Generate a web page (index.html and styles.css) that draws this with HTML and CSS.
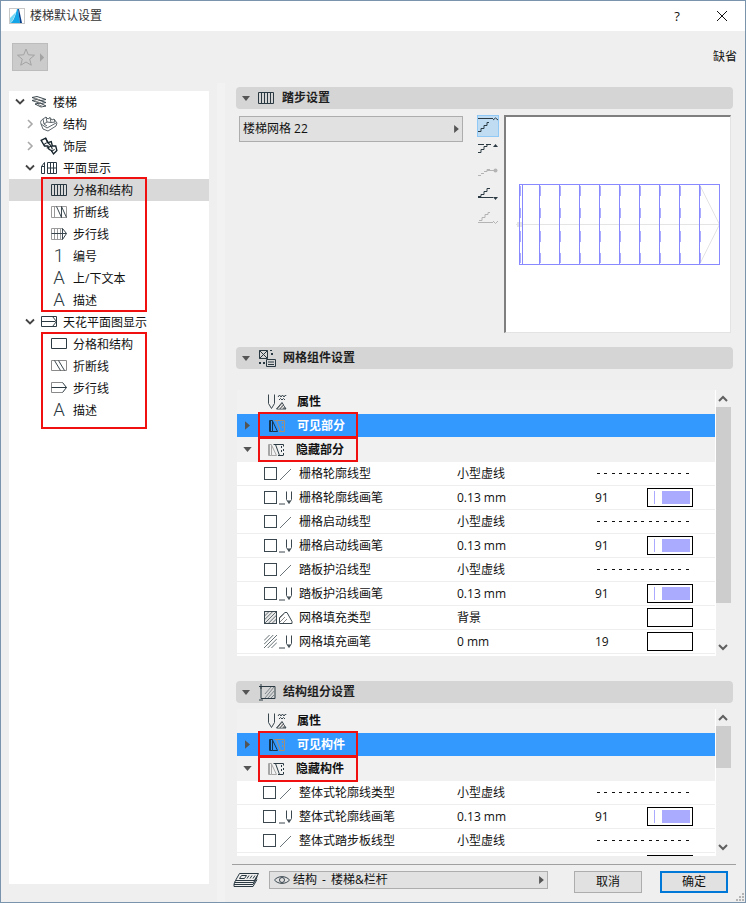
FILE: index.html
```html
<!DOCTYPE html>
<html lang="zh">
<head>
<meta charset="utf-8">
<title>楼梯默认设置</title>
<link rel="stylesheet" href="styles.css">
</head>
<body>
<svg class="defs" xmlns="http://www.w3.org/2000/svg">
  <symbol id="i-grid" viewBox="0 0 16 12"><path d="M.5.5h15v11H.5zM3.500.5v11M6.500.5v11M9.500.5v11M12.500.5v11" fill="none" stroke="#2b3a42"/></symbol>
  <symbol id="i-break" viewBox="0 0 16 12"><path d="M.5.5h15v11H.5zM3.500.5v11" fill="none" stroke="#9a9a9a"/><path d="M5.500.5l5 11v-11l5 11" fill="none" stroke="#3a474e"/></symbol>
  <symbol id="i-walk" viewBox="0 0 16 12"><path d="M11.500.5H.5v11h11M3.500.5v11M6.500.5v11M9.500.5v11" fill="none" stroke="#9a9a9a"/><path d="M.5 5.500h15M11.500.5v11M11.500.5l4 5-4 6" fill="none" stroke="#3a474e"/></symbol>
  <symbol id="i-rect" viewBox="0 0 16 12"><path d="M.5.5h15v10H.5z" fill="none" stroke="#2b3a42"/></symbol>
  <symbol id="i-cbreak" viewBox="0 0 16 12"><path d="M.5.5h15v10H.5z" fill="none" stroke="#8a8a8a"/><path d="M3.500.5l6 10M7.500.5l6 10" fill="none" stroke="#3a474e"/></symbol>
  <symbol id="i-cwalk" viewBox="0 0 16 12"><path d="M11.500.5H.5v10h11" fill="none" stroke="#8a8a8a"/><path d="M.5 5.500h15M11.500.5l4 5-4 5" fill="none" stroke="#2b3a42"/></symbol>
  <symbol id="i-stair" viewBox="0 0 16 12"><path d="M1 1.500l5-1 9 3-5 1zM1 4.500l5-1 9 3-5 1zM4 8l5-1 6 3-5 1z" fill="#fff" stroke="#3a474e"/><path d="M3 2l6 2M4 5l6 2M7 8.500l5 2" stroke="#8a8a8a" fill="none"/></symbol>
  <symbol id="i-struct" viewBox="0 0 18 18"><path d="M1 9C0 7 1 5 3 4l3-2 2 2 2-1.500 2 2.500 2-1 3 4-1 3-8 5-5-2z" fill="#fff" stroke="#5e676c"/><path d="M3 4l1 5 3 2M6 2l1 5M10 2.500l1 5M14 4l1 3M4 9l3-2 4 .5 4-.5M1 9l6 4 9-5" fill="none" stroke="#5e676c"/></symbol>
  <symbol id="i-finish" viewBox="0 0 16 16"><path d="M1 3l4-2 2 4 3-1 1 4 3 0 1 4-3 3-2-3-2-1-1-3-3 0z" fill="#fff" stroke="#17242c" stroke-width="1.200"/><path d="M3 7l3-2M6 10l4-2M10 13l3-2M5 1l2 4 3 3 1 3" fill="none" stroke="#17242c"/></symbol>
  <symbol id="i-plan" viewBox="0 0 16 12"><path d="M.5 11.500v-7h3v7zM3.500 11.500V.5M6.500 11.500V.5h9v11h-9zM9.500.5v11M12.500.5v11M6.500 6h9M.5 4.500L3.500.5" fill="none" stroke="#2b3a42"/></symbol>
  <symbol id="i-ceil" viewBox="0 0 16 12"><path d="M.5.5h15v10H.5zM.5 5.500h14M11.500.5l4 5-4 5" fill="none" stroke="#2b3a42"/></symbol>
  <symbol id="i-pen" viewBox="0 0 14 14"><path d="M7.500.5v8l2.500 4 2.500-4v-8" fill="none" stroke="#3a474e"/><path d="M0 13h6" stroke="#3a474e" fill="none"/><path d="M8.500 9.500h3L10 12z" fill="#3a474e"/></symbol>
  <symbol id="i-line" viewBox="0 0 14 14"><path d="M1 13L12 2" fill="none" stroke="#6a7378"/></symbol>
  <symbol id="i-fillt" viewBox="0 0 14 14"><path d="M.5 12.500v-6L6 1.500h2l5 9v2z" fill="none" stroke="#3a474e"/><path d="M1 11l5-5M4 12l4-4M1 7l4-4" stroke="#8a8a8a" fill="none"/></symbol>
  <symbol id="i-hatch" viewBox="0 0 14 14"><path d="M0 6l6-6M0 10L10 0M0 14L14 0M4 14L14 4M8 14l6-6" stroke="#5a6469" fill="none"/></symbol>
  <symbol id="i-attr" viewBox="0 0 19 16"><path d="M.5.5v9l3 5 3-5v-9" fill="none" stroke="#3a474e"/><path d="M10 3l1.500-2 1.500 2 1.500-2 1.500 2 1.500-2 .5 1M11 6l1.500-1.500L14 6l1.500-1.500L17 6" fill="none" stroke="#3a474e"/><path d="M8.500 15L14 8.500l4 6.500z" fill="#8b8b8b" stroke="#3a474e"/><path d="M10.500 15l4-5M13.500 15l3-3.500" stroke="#fff" fill="none"/></symbol>
  <symbol id="i-show" viewBox="0 0 16 12"><path d="M.5 11.500V.5h3v11zM3.500 1l5 10.500h-5M1.500 .5v11" fill="none" stroke="#17344c"/><path d="M5.500.5h10v11H10M7.500.5l4 11M13.500 2v2M13.500 6v2" fill="none" stroke="#a58f77"/></symbol>
  <symbol id="i-hide" viewBox="0 0 16 12"><path d="M.5 11.500V.5h3v11zM3.500 1l5 10.500h-5M1.500 .5v11" fill="none" stroke="#a6a6a6"/><path d="M5.500.5h10M10 11.500h5.500M7.500.5l4 11M15.500 .5v2M15.500 5v2M15.500 9v2M13.500 2v2M13.500 6v2" fill="none" stroke="#2b3a42"/></symbol>
  <symbol id="i-tri-r" viewBox="0 0 6 10"><path d="M0 0l6 5-6 5z" fill="#555"/></symbol>
  <symbol id="i-tri-d" viewBox="0 0 10 6"><path d="M0 0h10L5 6z" fill="#555"/></symbol>
  <symbol id="i-chev-d" viewBox="0 0 10 7"><path d="M1 1l4 4 4-4" fill="none" stroke="#444" stroke-width="1.800"/></symbol>
  <symbol id="i-chev-r" viewBox="0 0 10 10"><path d="M3 1l4 4-4 4" fill="none" stroke="#a9a9a9" stroke-width="1.600"/></symbol>
  <symbol id="i-up" viewBox="0 0 10 7"><path d="M1 6l4-4 4 4" fill="none" stroke="#606060" stroke-width="2"/></symbol>
  <symbol id="i-down" viewBox="0 0 10 7"><path d="M1 1l4 4 4-4" fill="none" stroke="#606060" stroke-width="2"/></symbol>
</svg>

<div class="window">
  <header class="title">
    <svg class="logo" viewBox="0 0 16 16"><rect x=".5" y=".5" width="15" height="15" fill="#fff" stroke="#c8c8c8"/><path d="M1 15C4 15 7 6 8 1h1l2 14z" fill="#12a5e8"/><path d="M1 15C3 15 6 8 7 4L1 10z" fill="#6fd6f5"/><path d="M9 1h1l3 14h-2z" fill="#0a3f8a"/></svg>
    <span class="title-text">楼梯默认设置</span>
    <span class="help">?</span>
    <svg class="close" viewBox="0 0 10 10"><path d="M0 0l10 10M10 0L0 10" stroke="#111" fill="none"/></svg>
  </header>

  <div class="toolbar">
    <div class="fav">
      <svg class="star" viewBox="0 0 18 18"><path d="M9 1l2.300 5.800 6.200.4-4.800 4 1.600 6L9 14l-5.300 3.200 1.600-6-4.800-4 6.200-.4z" fill="none" stroke="#a3a3a3"/></svg>
      <svg class="fav-arrow" viewBox="0 0 6 10"><path d="M0 0l5 5-5 5z" fill="#a3a3a3"/></svg>
    </div>
    <span class="default">缺省</span>
  </div>

  <div class="main">
    <nav class="tree">
      <div class="node lv0"><svg class="chev"><use href="#i-chev-d"/></svg><svg class="ic"><use href="#i-stair"/></svg><span>楼梯</span></div>
      <div class="node lv1"><svg class="chev"><use href="#i-chev-r"/></svg><svg class="ic-lg"><use href="#i-struct"/></svg><span>结构</span></div>
      <div class="node lv1"><svg class="chev"><use href="#i-chev-r"/></svg><svg class="ic-lg"><use href="#i-finish"/></svg><span>饰层</span></div>
      <div class="node lv1"><svg class="chev"><use href="#i-chev-d"/></svg><svg class="ic-lg ic-plan"><use href="#i-plan"/></svg><span>平面显示</span></div>
      <div class="node lv2 active"><svg class="ic"><use href="#i-grid"/></svg><span>分格和结构</span></div>
      <div class="node lv2"><svg class="ic"><use href="#i-break"/></svg><span>折断线</span></div>
      <div class="node lv2"><svg class="ic"><use href="#i-walk"/></svg><span>步行线</span></div>
      <div class="node lv2"><b class="glyph">1</b><span>编号</span></div>
      <div class="node lv2"><b class="glyph">A</b><span>上/下文本</span></div>
      <div class="node lv2"><b class="glyph">A</b><span>描述</span></div>
      <div class="node lv1"><svg class="chev"><use href="#i-chev-d"/></svg><svg class="ic-lg ic-plan"><use href="#i-ceil"/></svg><span>天花平面图显示</span></div>
      <div class="node lv2"><svg class="ic"><use href="#i-rect"/></svg><span>分格和结构</span></div>
      <div class="node lv2"><svg class="ic"><use href="#i-cbreak"/></svg><span>折断线</span></div>
      <div class="node lv2"><svg class="ic"><use href="#i-cwalk"/></svg><span>步行线</span></div>
      <div class="node lv2"><b class="glyph">A</b><span>描述</span></div>
      <div class="mark mark-a"></div>
      <div class="mark mark-b"></div>
    </nav>

    <div class="splitter"></div>

    <div class="pane">
      <section class="sec-head sec-1">
        <svg class="tri-d"><use href="#i-tri-d"/></svg>
        <svg class="sec-ic sec-ic-grid"><use href="#i-grid"/></svg>
        <span>踏步设置</span>
      </section>

      <div class="tread">
        <div class="select tread-select"><span>楼梯网格 22</span><svg class="tri-r"><use href="#i-tri-r"/></svg></div>
        <div class="tools">
          <div class="tool on"><svg viewBox="0 0 20 20"><path d="M0 2.500h15M0 15.500h3v-3h3v-3h3v-3h2" fill="none" stroke="#2b3a42"/><path d="M15 4l2.500-2L20 4" fill="none" stroke="#2b3a42"/></svg></div>
          <div class="tool"><svg viewBox="0 0 20 20"><path d="M0 4.500h6M8 4.500h5M0 12.500h3v-3h3v-3h3v-2" fill="none" stroke="#2b3a42"/><path d="M15 7l2.500-3L20 7z" fill="#2b3a42"/></svg></div>
          <div class="tool"><svg viewBox="0 0 20 20"><path d="M0 11.500h3M3 9.500h3M6 7.500h3v-2h3M9 6.500h8" fill="none" stroke="#b4b4b4"/><circle cx="17.500" cy="6.500" r="2" fill="#b4b4b4"/></svg></div>
          <div class="tool"><svg viewBox="0 0 20 20"><path d="M0 8.500h3v-2h3v-3h3v-3h3M0 9.500h15" fill="none" stroke="#2b3a42"/><path d="M15 9h5l-2.500 3z" fill="#2b3a42"/></svg></div>
          <div class="tool"><svg viewBox="0 0 20 20"><path d="M1 8.500h3v-3h3v-3h3v-2h2M0 10.500h15M15 9l2.500 2.500L20 9" fill="none" stroke="#b4b4b4"/></svg></div>
        </div>
        <div class="preview">
          <svg viewBox="506 117 224 215" shape-rendering="crispEdges">
            <path d="M519.500 224.500H719.500M699.500 184.500L719.500 224.500L699.500 264.500" fill="none" stroke="#e4e4e4" shape-rendering="auto"/>
            <circle cx="519.500" cy="224.500" r="3" fill="#e4e4e4"/>
            <path d="M519.500 184.500h200v80h-200zM522.500 184.500v80M539.500 184.500v80M559.500 184.500v80M579.500 184.500v80M599.500 184.500v80M619.500 184.500v80M639.500 184.500v80M659.500 184.500v80M679.500 184.500v80M699.500 184.500v80" fill="none" stroke="#8888ff"/>
            <path d="M520.500 186v10M520.500 208v10M520.500 231v11M520.500 253v10M540.500 186v10M540.500 208v10M540.500 231v11M540.500 253v10M560.500 186v10M560.500 208v10M560.500 231v11M560.500 253v10M580.500 186v10M580.500 208v10M580.500 231v11M580.500 253v10M600.500 186v10M600.500 208v10M600.500 231v11M600.500 253v10M620.500 186v10M620.500 208v10M620.500 231v11M620.500 253v10M640.500 186v10M640.500 208v10M640.500 231v11M640.500 253v10M660.500 186v10M660.500 208v10M660.500 231v11M660.500 253v10M680.500 186v10M680.500 208v10M680.500 231v11M680.500 253v10M700.500 186v10M700.500 208v10M700.500 231v11M700.500 253v10" fill="none" stroke="#aaaaff"/>
          </svg>
        </div>
      </div>

      <section class="sec-head sec-2">
        <svg class="tri-d"><use href="#i-tri-d"/></svg>
        <svg class="sec-ic" viewBox="0 0 18 18"><path d="M1.500 1.500h8v8h-8zM1.500 1.500l8 8M9.500 1.500l-8 8" fill="none" stroke="#2b3a42"/><path d="M12 1h2v1h-2zM13 4h2v2h-2zM1 13h2v2H1zM5 13h2v2H5z" fill="#2b3a42"/><path d="M8.500 10.500h9v7h-9zM10 13h6M10 15.500h6" fill="none" stroke="#2b3a42"/></svg>
        <span>网格组件设置</span>
      </section>

      <div class="table table-grid">
        <div class="list">
          <div class="group g-attr"><svg class="g-ic"><use href="#i-attr"/></svg><span class="g-label">属性</span></div>
          <div class="group g-sel"><svg class="g-tri"><use href="#i-tri-r"/></svg><svg class="g-ic2"><use href="#i-show"/></svg><span class="g-label">可见部分</span><div class="mark mark-top"></div></div>
          <div class="group g-hid"><svg class="g-tri-d"><use href="#i-tri-d"/></svg><svg class="g-ic2"><use href="#i-hide"/></svg><span class="g-label">隐藏部分</span><div class="mark mark-bot"></div></div>

          <div class="item"><i class="cb"></i><svg class="it"><use href="#i-line"/></svg><span>栅格轮廓线型</span><span>小型虚线</span><div class="dash"></div></div>
          <div class="item"><i class="cb"></i><svg class="it"><use href="#i-pen"/></svg><span>栅格轮廓线画笔</span><span>0.13 mm</span><span>91</span><div class="swatch"><i class="s-l"></i><i class="s-f"></i></div></div>
          <div class="item"><i class="cb"></i><svg class="it"><use href="#i-line"/></svg><span>栅格启动线型</span><span>小型虚线</span><div class="dash"></div></div>
          <div class="item"><i class="cb"></i><svg class="it"><use href="#i-pen"/></svg><span>栅格启动线画笔</span><span>0.13 mm</span><span>91</span><div class="swatch"><i class="s-l"></i><i class="s-f"></i></div></div>
          <div class="item"><i class="cb"></i><svg class="it"><use href="#i-line"/></svg><span>踏板护沿线型</span><span>小型虚线</span><div class="dash"></div></div>
          <div class="item"><i class="cb"></i><svg class="it"><use href="#i-pen"/></svg><span>踏板护沿线画笔</span><span>0.13 mm</span><span>91</span><div class="swatch"><i class="s-l"></i><i class="s-f"></i></div></div>
          <div class="item"><svg class="cb-hatch"><use href="#i-hatch"/></svg><svg class="it"><use href="#i-fillt"/></svg><span>网格填充类型</span><span>背景</span><span></span><div class="swatch"></div></div>
          <div class="item"><svg class="cb-plain"><use href="#i-hatch"/></svg><svg class="it"><use href="#i-pen"/></svg><span>网格填充画笔</span><span>0 mm</span><span>19</span><div class="swatch"></div></div>
        </div>
        <div class="scroll">
          <svg class="arrow"><use href="#i-up"/></svg>
          <div class="thumb thumb-long"></div>
          <svg class="arrow arrow-down"><use href="#i-down"/></svg>
        </div>
      </div>

      <section class="sec-head sec-3">
        <svg class="tri-d"><use href="#i-tri-d"/></svg>
        <svg class="sec-ic" viewBox="0 0 18 18"><path d="M3 3.500h14v12H3z" fill="none" stroke="#2b3a42"/><path d="M7 15l9-11M10 15l7-8M13 15l4-4M7 11l6-7" stroke="#7d868b" fill="none"/><path d="M3 1v5M1 3.500h4M5 17h-4" stroke="#2b3a42" fill="none"/></svg>
        <span>结构组分设置</span>
      </section>

      <div class="table table-struct">
        <div class="list">
          <div class="group g-attr"><svg class="g-ic"><use href="#i-attr"/></svg><span class="g-label">属性</span></div>
          <div class="group g-sel"><svg class="g-tri"><use href="#i-tri-r"/></svg><svg class="g-ic2"><use href="#i-show"/></svg><span class="g-label">可见构件</span><div class="mark mark-top"></div></div>
          <div class="group g-hid"><svg class="g-tri-d"><use href="#i-tri-d"/></svg><svg class="g-ic2"><use href="#i-hide"/></svg><span class="g-label">隐藏构件</span><div class="mark mark-bot mark-tall"></div></div>

          <div class="item"><i class="cb"></i><svg class="it"><use href="#i-line"/></svg><span>整体式轮廓线类型</span><span>小型虚线</span><div class="dash"></div></div>
          <div class="item"><i class="cb"></i><svg class="it"><use href="#i-pen"/></svg><span>整体式轮廓线画笔</span><span>0.13 mm</span><span>91</span><div class="swatch"><i class="s-l"></i><i class="s-f"></i></div></div>
          <div class="item"><i class="cb"></i><svg class="it"><use href="#i-line"/></svg><span>整体式踏步板线型</span><span>小型虚线</span><div class="dash"></div></div>
          <div class="item item-cut"><div class="swatch"></div></div>
        </div>
        <div class="scroll">
          <svg class="arrow"><use href="#i-up"/></svg>
          <div class="thumb thumb-short"></div>
          <svg class="arrow arrow-down"><use href="#i-down"/></svg>
        </div>
      </div>

      <footer class="foot">
        <svg class="layers" viewBox="0 0 25 15"><path d="M5.500.5h19l-4 7h-19z" fill="none" stroke="#2b3a42"/><path d="M7.500 2.500h5l-2 3h-5zM15 2.500l-2 3M18 2.500l-2 3M21 2.500l-2 3" fill="none" stroke="#2b3a42"/><path d="M1.500 7.500l-1 2h19l4-7M.5 9.500l-.5 2h19l4-7M0 11.500l0 2h19l4-7" fill="none" stroke="#2b3a42"/></svg>
        <div class="select foot-select">
          <svg class="eye" viewBox="0 0 16 10"><path d="M.5 5C4 .5 12 .5 15.500 5 12 9.500 4 9.500.5 5z" fill="none" stroke="#3a474e"/><circle cx="8" cy="5" r="2.500" fill="none" stroke="#3a474e"/></svg>
          <span>结构 - 楼梯&amp;栏杆</span>
          <svg class="tri-r"><use href="#i-tri-r"/></svg>
        </div>
        <button class="btn btn-cancel" type="button">取消</button>
        <button class="btn btn-ok" type="button">确定</button>
      </footer>
    </div>
  </div>
  <svg class="grip" viewBox="0 0 10 10"><path d="M7 1h2v2H7zM4 4h2v2H4zM7 4h2v2H7zM1 7h2v2H1zM4 7h2v2H4zM7 7h2v2H7z" fill="#b4b4b4"/></svg>
</div>
</body>
</html>
```
FILE: styles.css
```css
* { box-sizing: border-box; }
html, body { margin: 0; padding: 0; }
body {
  width: 746px;
  height: 903px;
  overflow: hidden;
  font: 12px/16px "Open Sans", "Noto Sans CJK SC", sans-serif;
  color: #111;
  background: #f0f0f0;
}
.defs { position: absolute; width: 0; height: 0; }
svg { display: block; flex: none; overflow: visible; }

.window {
  position: relative;
  width: 746px;
  height: 903px;
  border: 1px solid #7a94ad;
  background: #efefef;
  display: flex;
  flex-direction: column;
}

/* title bar */
.title {
  height: 30px;
  flex: none;
  background: #fff;
  display: flex;
  align-items: center;
  padding-left: 8px;
}
.logo { width: 16px; height: 16px; margin-right: 5px; }
.title-text { color: #333; flex: 1; }
.help { width: 14px; font-size: 13px; text-align: center; margin-right: 33px; }
.close { width: 10px; height: 10px; margin-right: 18px; }

/* toolbar */
.toolbar {
  height: 52px;
  flex: none;
  padding: 12px 8px 0 11px;
  display: flex;
  justify-content: space-between;
}
.fav {
  width: 36px;
  height: 28px;
  background: #cbcbcb;
  border: 1px solid #bcbcbc;
  display: flex;
  align-items: center;
  padding-left: 4px;
}
.star { width: 18px; height: 18px; margin-right: 5px; }
.fav-arrow { width: 5px; height: 9px; }
.default { margin-top: 6px; line-height: 16px; }

/* main */
.main { flex: 1; display: flex; min-height: 0; }
.tree {
  position: relative;
  width: 200px;
  margin: 8px 0 18px 8px;
  background: #fff;
  flex: none;
}
.node {
  height: 22px;
  display: flex;
  align-items: center;
}
.node span { margin-top: 1px; }
.chev { width: 10px; height: 10px; margin-right: 6px; }
.ic { width: 16px; height: 12px; margin-right: 6px; }
.ic-lg { width: 18px; height: 18px; margin-right: 5px; }
.ic-plan { width: 16px; height: 12px; margin-left: 1px; margin-right: 6px; }
.lv0 { padding-left: 6px; }
.lv1 { padding-left: 16px; }
.lv1 .chev { margin-right: 5px; }
.lv2 { padding-left: 42px; }
.active { background: #d9d9d9; }
.glyph {
  width: 16px;
  margin-right: 6px;
  font: 300 18.500px/20px Roboto, sans-serif;
  text-align: center;
  color: #2b3a42;
}

.mark {
  position: absolute;
  border: 2px solid #f01010;
  pointer-events: none;
}
.mark-a { left: 32px; top: 86px; width: 106px; height: 135px; }
.mark-b { left: 32px; top: 241px; width: 106px; height: 97px; }
.mark-top { left: 21px; top: -2px; width: 100px; height: 26px; }
.mark-bot { left: 21px; top: 0; width: 100px; height: 25px; }
.mark-tall { height: 26px; }

.splitter { width: 8px; margin-left: 8px; background: #f2f2f2; flex: none; }

/* right pane */
.pane { width: 508px; padding-left: 11px; flex: none; }
.sec-head {
  width: 497px;
  height: 22px;
  background: #d5d5d5;
  border-radius: 4px;
  display: flex;
  align-items: center;
  padding-left: 6px;
  font-weight: 700;
  color: #1f1f1f;
}
.sec-1 { margin-top: 4px; }
.sec-2 { margin-top: 14px; }
.sec-3 { margin-top: 25px; }
.tri-d { width: 8px; height: 5px; margin-right: 8px; }
.sec-ic { width: 18px; height: 18px; margin-right: 7px; }
.sec-ic-grid { width: 16px; height: 12px; margin-right: 8px; }

/* tread */
.tread { display: flex; height: 218px; margin-top: 6px; }
.select {
  background: #e1e1e1;
  border: 1px solid #adadad;
  display: flex;
  align-items: center;
}
.tread-select {
  width: 224px;
  height: 26px;
  margin: 1px 14px 0 3px;
  padding: 0 3px;
  justify-content: space-between;
}
.tri-r { width: 5px; height: 8px; }
.tools { width: 22px; margin-right: 5px; display: flex; flex-direction: column; gap: 2px; }
.tool { height: 22px; border: 1px solid transparent; }
.tool svg { width: 20px; height: 20px; }
.tool.on { background: #bfdcf3; border-color: #90c8f6; }
.preview {
  width: 227px;
  height: 218px;
  background: #fff;
  border-style: solid;
  border-width: 2px 1px 1px 2px;
  border-color: #7f7f7f #e3e3e3 #e3e3e3 #7f7f7f;
}
.preview svg { width: 224px; height: 215px; }

/* tables */
.table { display: flex; margin-left: 1px; width: 496px; overflow: hidden; }
.table-grid { margin-top: 21px; height: 266px; }
.table-struct { margin-top: 6px; height: 147px; }
.list { width: 479px; border-right: 1px solid #fff; background: #fff; flex: none; }
.group {
  position: relative;
  display: flex;
  align-items: center;
  background: #f1f1f1;
  font-weight: 700;
}
.g-attr { height: 24px; padding-left: 31px; }
.g-sel { height: 23px; background: #3399ff; color: #fff; padding-left: 8px; }
.g-hid { height: 25px; padding-left: 6px; }
.g-ic { width: 19px; height: 16px; margin-right: 10px; }
.g-ic2 { width: 16px; height: 12px; margin-left: 19px; margin-right: 12px; }
.g-tri { width: 5px; height: 9px; }
.g-tri-d { width: 9px; height: 5px; margin-right: -2px; }
.g-hid .g-ic2 { margin-left: 18px; }
.item {
  display: grid;
  grid-template-columns: 27px 15px 20px 158px 138px 52px 46px;
  align-items: center;
  height: 24px;
  border-bottom: 1px solid #eeeeee;
}
.item > .cb { grid-column: 2; width: 13px; height: 13px; border: 1px solid #3a474e; }
.cb-hatch, .cb-plain { grid-column: 2; width: 13px; height: 13px; }
.cb-hatch { outline: 1px solid #3a474e; outline-offset: -1px; background: #e8e8e8; }
.it { width: 14px; height: 14px; }
.item .it { grid-column: 3; }
.item > span:nth-of-type(1) { grid-column: 4; }
.item > span:nth-of-type(2) { grid-column: 5; }
.item > span:nth-of-type(3) { grid-column: 6; }
.table-struct .item > .cb { margin-left: -1px; }
.item-cut { align-items: start; padding-top: 2px; }
.dash {
  grid-column: 6 / 8;
  margin-left: 2px;
  height: 1px;
  background: repeating-linear-gradient(90deg, #111 0 3px, transparent 3px 7.400px);
}
.swatch {
  grid-column: 7;
  width: 46px;
  height: 19px;
  border: 1px solid #000;
  background: #fff;
  display: flex;
  padding: 2px 2px 2px 6px;
}
.s-l { width: 1px; background: #aaaaff; margin-right: 7px; }
.s-f { width: 28px; background: #aaaaff; }

.scroll { width: 17px; display: flex; flex-direction: column; }
.arrow { width: 10px; height: 7px; margin: 5px 0 5px 2px; }
.arrow-down { margin-top: auto; margin-bottom: 5px; }
.thumb { width: 15px; background: #cdcdcd; }
.thumb-long { height: 196px; }
.thumb-short { height: 42px; }

/* footer */
.foot {
  width: 504px;
  margin: 8px 0 0 -4px;
  border-top: 1px solid #a0a0a0;
  padding: 6px 0 0 2px;
  display: flex;
  align-items: flex-start;
}
.layers { width: 25px; height: 15px; margin: 2px 10px 0 0; }
.foot-select {
  width: 279px;
  height: 18px;
  padding: 0 3px 0 4px;
}
.eye { width: 16px; height: 10px; margin-right: 3px; }
.foot-select span { flex: 1; word-spacing: 2px; }
.btn {
  width: 68px;
  height: 22px;
  padding: 0;
  background: #e1e1e1;
  border: 1px solid #adadad;
  font: inherit;
  color: #111;
}
.btn-cancel { margin-left: 26px; }
.btn-ok { margin-left: 18px; border: 2px solid #0078d7; }

.grip { position: absolute; right: 0; bottom: 0; width: 10px; height: 10px; }
```
